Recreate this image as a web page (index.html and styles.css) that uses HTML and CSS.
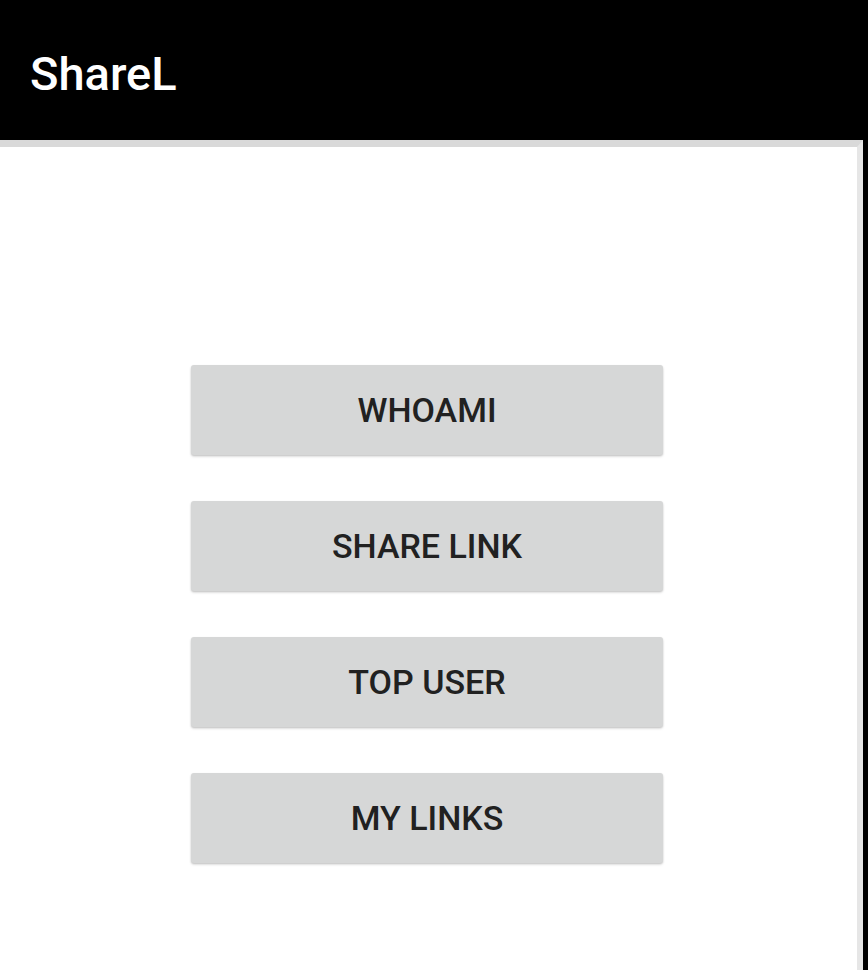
FILE: index.html
```html
<!DOCTYPE html>
<html>
<head>
<meta charset="utf-8">
<link rel="stylesheet" href="styles.css">
</head>
<body>
<header class="appbar"><h1 class="title">ShareL</h1></header>
<main class="content">
  <div class="buttons">
    <button class="btn">WHOAMI</button>
    <button class="btn">SHARE LINK</button>
    <button class="btn">TOP USER</button>
    <button class="btn">MY LINKS</button>
  </div>
</main>
</body>
</html>
```
FILE: styles.css
```css
html, body {
  margin: 0;
  padding: 0;
  height: 100%;
  background: #000;
  font-family: Roboto, "Noto Sans", sans-serif;
}
body {
  display: flex;
  flex-direction: column;
}
.appbar {
  height: 140px;
  display: flex;
  align-items: center;
  padding-left: 30px;
  box-sizing: border-box;
}
.title {
  margin: 0;
  color: #fff;
  font-size: 47px;
  font-weight: 500;
  line-height: 1;
  padding-top: 6px;
}
.content {
  flex: 1;
  margin-right: 5px;
  background: #fff;
  border-top: 7px solid #d9d9d9;
  border-right: 6px solid #e6e6e6;
  display: flex;
  justify-content: center;
  padding-top: 218px;
  padding-right: 3px;
}
.buttons {
  display: flex;
  flex-direction: column;
  gap: 46px;
}
.btn {
  width: 472px;
  height: 90px;
  border: none;
  border-radius: 3px;
  background: #d6d7d7;
  box-shadow: 0 1px 2px rgba(0,0,0,0.18), 0 2px 3px rgba(0,0,0,0.08);
  color: #212121;
  font-family: Roboto, "Noto Sans", sans-serif;
  font-size: 34px;
  font-weight: 500;
  padding: 0;
}
```
